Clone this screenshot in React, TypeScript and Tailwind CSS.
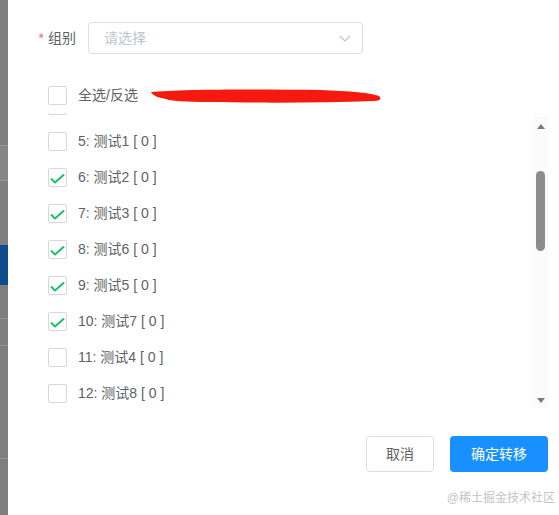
import React from "react";

const items = [
  { id: 4, name: "测试0", checked: false },
  { id: 5, name: "测试1", checked: false },
  { id: 6, name: "测试2", checked: true },
  { id: 7, name: "测试3", checked: true },
  { id: 8, name: "测试6", checked: true },
  { id: 9, name: "测试5", checked: true },
  { id: 10, name: "测试7", checked: true },
  { id: 11, name: "测试4", checked: false },
  { id: 12, name: "测试8", checked: false },
  { id: 13, name: "测试9", checked: false },
];

function Box({ checked }: { checked?: boolean }) {
  return (
    <span className="w-[19px] h-[19px] shrink-0 rounded-[2px] border border-[#d4d7de] bg-white flex items-center justify-center">
      {checked && (
        <svg width="19" height="19" viewBox="0 0 19 19" className="-m-px">
          <polyline
            points="3.5,11 7,14.5 15.5,7"
            fill="none"
            stroke="#1dbf6c"
            strokeWidth="2"
            strokeLinecap="round"
            strokeLinejoin="round"
          />
        </svg>
      )}
    </span>
  );
}

export default function App() {
  return (
    <div
      className="flex w-[559px] h-[515px] overflow-hidden bg-white antialiased"
      style={{ fontFamily: '"Liberation Sans", "Noto Sans CJK SC", sans-serif' }}
    >
      {/* mask over the page behind */}
      <div className="w-[8px] shrink-0 bg-[#7e7e7e] flex flex-col">
        <div className="h-[145px]" />
        <div className="h-[36px] border-y border-[#9a9a9a] bg-[#868686]" />
        <div className="h-[64px]" />
        <div className="h-[40px] bg-[#0f4c8c]" />
        <div className="h-[33px]" />
        <div className="h-px bg-[#959595]" />
        <div className="h-[26px]" />
        <div className="h-px bg-[#959595]" />
        <div className="h-[112px]" />
        <div className="h-px bg-[#959595]" />
      </div>

      <div className="flex-1 flex flex-col">
        {/* group select */}
        <div className="flex items-center mt-[22px] h-[32px]">
          <label className="w-[80px] pr-[12px] text-right text-[14px] text-[#606266]">
            <span className="text-[#f56c6c] mr-[4px]">*</span>组别
          </label>
          <div className="w-[275px] h-[32px] rounded-[4px] border border-[#dcdfe6] flex items-center justify-between pl-[15px] pr-[10px]">
            <span className="text-[14px] text-[#c0c4cc]">请选择</span>
            <svg width="14" height="14" viewBox="0 0 14 14">
              <polyline points="2,5 7,10 12,5" fill="none" stroke="#c0c4cc" strokeWidth="1.2" />
            </svg>
          </div>
        </div>

        {/* select all */}
        <div className="flex items-center mt-[32px] h-[19px] pl-[40px]">
          <Box />
          <span className="ml-[11px] text-[14px] text-[#606266]">全选/反选</span>
          <svg width="232" height="16" viewBox="0 0 232 16" className="ml-[12px]">
            <path
              d="M1,4 C30,1 110,1 170,2 C200,3 222,5 229,8 C232,11 230,13 224,13 C170,15 110,15 60,14 C35,14 20,13 16,11 C10,10 3,8 1,4 Z"
              fill="#f5190f"
            />
          </svg>
        </div>

        {/* transfer list, scrolled so item 4 is mostly hidden */}
        <div className="mt-[8px] h-[295px] flex">
          <div className="flex-1 overflow-hidden">
            <div className="-mt-[26px] pl-[40px]">
              {items.map((it, i) => (
                <div key={it.id} className="h-[36px] flex items-center">
                  <Box checked={it.checked} />
                  {i > 0 && i < items.length - 1 && (
                    <span className="ml-[11px] text-[14px] text-[#606266]">
                      {it.id}: <span style={{ fontFamily: '"Noto Sans CJK SC", sans-serif' }}>测试</span>
                      {it.name.slice(2)} [ 0 ]
                    </span>
                  )}
                </div>
              ))}
            </div>
          </div>
          <div className="w-[15px] mr-[11px] bg-[#fbfbfb] flex flex-col items-center">
            <svg width="8" height="5" viewBox="0 0 8 5" className="mt-[11px]">
              <polygon points="0,5 4,0 8,5" fill="#7a7a7a" />
            </svg>
            <div className="mt-[42px] w-[9px] h-[80px] rounded-full bg-[#8c8c8c]" />
            <div className="flex-1" />
            <svg width="8" height="5" viewBox="0 0 8 5" className="mb-[5px]">
              <polygon points="0,0 8,0 4,5" fill="#7a7a7a" />
            </svg>
          </div>
        </div>

        {/* footer */}
        <div className="flex justify-end gap-[16px] mt-[28px] pr-[11px]">
          <button className="w-[68px] h-[36px] rounded-[4px] border border-[#dcdfe6] bg-white text-[14px] text-[#606266]">
            取消
          </button>
          <button className="w-[98px] h-[36px] rounded-[4px] bg-[#1890ff] text-[14px] text-white">
            确定转移
          </button>
        </div>

        <div className="mt-[17px] pr-[4px] text-right text-[12px] text-[#c4c4c4]">@稀土掘金技术社区</div>
      </div>
    </div>
  );
}
